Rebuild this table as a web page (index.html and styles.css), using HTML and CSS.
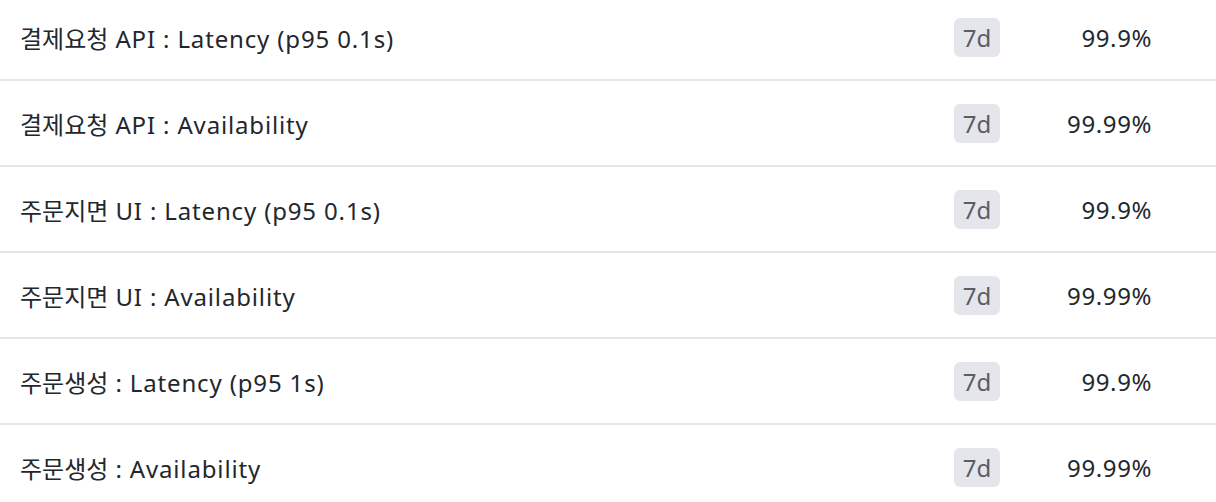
FILE: index.html
```html
<!DOCTYPE html>
<html lang="ko">
<head>
<meta charset="utf-8">
<link rel="stylesheet" href="styles.css">
</head>
<body>
<ul class="slo-list">
  <li class="slo-row"><span class="slo-name"><span class="ko">결제요청</span> API : Latency (p95 0.1s)</span><span class="slo-window">7d</span><span class="slo-target">99.9%</span></li>
  <li class="slo-row"><span class="slo-name"><span class="ko">결제요청</span> API : Availability</span><span class="slo-window">7d</span><span class="slo-target">99.99%</span></li>
  <li class="slo-row"><span class="slo-name"><span class="ko">주문지면</span> UI : Latency (p95 0.1s)</span><span class="slo-window">7d</span><span class="slo-target">99.9%</span></li>
  <li class="slo-row"><span class="slo-name"><span class="ko">주문지면</span> UI : Availability</span><span class="slo-window">7d</span><span class="slo-target">99.99%</span></li>
  <li class="slo-row"><span class="slo-name"><span class="ko">주문생성</span> : Latency (p95 1s)</span><span class="slo-window">7d</span><span class="slo-target">99.9%</span></li>
  <li class="slo-row"><span class="slo-name"><span class="ko">주문생성</span> : Availability</span><span class="slo-window">7d</span><span class="slo-target">99.99%</span></li>
</ul>
</body>
</html>
```
FILE: styles.css
```css
html, body {
  margin: 0;
  padding: 0;
  background: #ffffff;
  overflow: hidden;
}
body {
  font-family: "Noto Sans", "Noto Sans CJK KR", sans-serif;
  font-size: 24px;
  color: #23272d;
}
.slo-list {
  list-style: none;
  margin: -5px 0 0 0;
  padding: 0;
}
.slo-row {
  display: flex;
  align-items: center;
  height: 84px;
  padding: 0 64px 0 20px;
  border-bottom: 2px solid #e6e6e8;
}
.slo-name {
  flex: 1;
  white-space: nowrap;
  letter-spacing: 0.85px;
}
.ko {
  font-family: "Noto Sans CJK KR", sans-serif;
  font-size: 24px;
  letter-spacing: 0;
}
.slo-window {
  display: flex;
  align-items: center;
  justify-content: center;
  width: 46px;
  height: 39px;
  border-radius: 6px;
  background: #e5e6ec;
  color: #5a5d66;
}
.slo-target {
  width: 120px;
  margin-left: 32px;
  text-align: right;
  letter-spacing: 0.6px;
}
```
